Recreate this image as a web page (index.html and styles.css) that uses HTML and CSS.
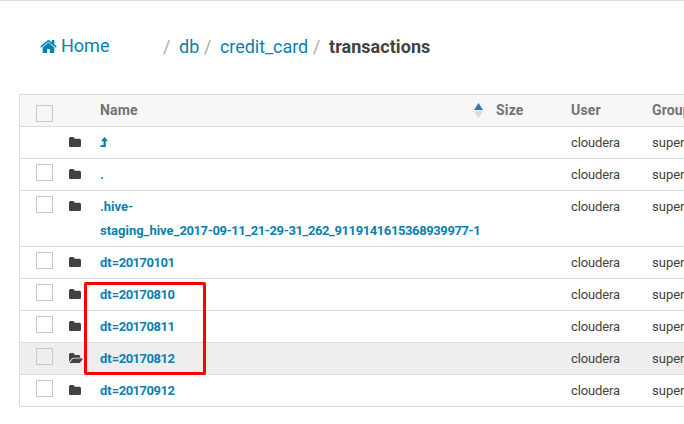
FILE: index.html
```html
<!DOCTYPE html>
<html lang="en">
<head>
<meta charset="utf-8">
<title>File Browser</title>
<link rel="stylesheet" href="styles.css">
</head>
<body>
<svg class="defs" aria-hidden="true">
  <symbol id="home" viewBox="89 253 1614 1283"><path d="M1472 992v480q0 26-19 45t-45 19h-384v-384h-256v384h-384q-26 0-45-19t-19-45v-480q0-1 .5-3t.5-3l575-474 575 474q1 2 1 6zm223-69l-62 74q-8 9-21 11h-3q-13 0-21-7l-692-577-692 577q-12 8-24 7-13-2-21-11l-62-74q-8-10-7-23.5t11-21.5l719-599q32-26 76-26t76 26l244 204v-195q0-14 9-23t23-9h192q14 0 23 9t9 23v408l219 182q10 8 11 21.5t-7 23.5z"/></symbol>
  <symbol id="folder" viewBox="64 128 1664 1408"><path d="M1728 608v704q0 92-66 158t-158 66h-1216q-92 0-158-66t-66-158v-960q0-92 66-158t158-66h320q92 0 158 66t66 158v32h672q92 0 158 66t66 158z"/></symbol>
  <symbol id="folder-open" viewBox="0 128 1920 1408"><path d="M1879 952q0 31-31 66l-336 396q-43 51-120.5 86.5t-143.5 35.5h-1088q-34 0-60.5-13t-26.5-43q0-31 31-66l336-396q43-51 120.5-86.5t143.5-35.5h1088q34 0 60.5 13t26.5 43zm-343-344v160h-832q-94 0-197 47.5t-164 119.5l-337 396-5 6q0-4-.5-12.5t-.5-12.5v-960q0-92 66-158t158-66h320q92 0 158 66t66 158v32h544q92 0 158 66t66 158z"/></symbol>
  <symbol id="level-up" viewBox="0 0 8 11"><path d="M4.5 0 7.6 3.5Q7.8 4.2 7 4.2H5.8V9.5Q5.8 10 5.3 10H.5L0 9.6 1.2 8H3.5V4.2H2Q1.2 4.2 1.4 3.5Z"/></symbol>
</svg>
<nav class="crumbs">
  <a class="home"><svg class="home-icon"><use href="#home"/></svg>Home</a>
  <span class="sep">/</span><a class="db">db</a>
  <span class="sep">/</span><a class="card">credit_card</a>
  <span class="sep">/</span><strong>transactions</strong>
</nav>
<main class="files">
  <div class="row head"><span class="box"></span><span></span><span>Name</span><svg class="sort" viewBox="0 0 9 15"><path class="up" d="M4.5 0 9 7H0Z"/><path class="down" d="M0 8H9L4.5 15Z"/></svg><span>Size</span><span>User</span><span>Group</span></div>
  <div class="row"><span></span><svg class="folder"><use href="#folder"/></svg><a class="name"><svg class="up-icon"><use href="#level-up"/></svg></a><span class="user">cloudera</span><span>supergroup</span></div>
  <div class="row"><span class="box"></span><svg class="folder"><use href="#folder"/></svg><a class="name">.</a><span class="user">cloudera</span><span>supergroup</span></div>
  <div class="row"><span class="box"></span><svg class="folder"><use href="#folder"/></svg><a class="name">.hive-<br>staging_hive_<span class="num">2017-09-11_21-29-31_262_9119141615368939977-1</span></a><span class="user">cloudera</span><span>supergroup</span></div>
  <div class="row"><span class="box"></span><svg class="folder"><use href="#folder"/></svg><a class="name">dt<span class="date">=20170101</span></a><span class="user">cloudera</span><span>supergroup</span></div>
  <div class="row marked"><span class="box"></span><svg class="folder"><use href="#folder"/></svg><a class="name">dt<span class="date">=20170810</span></a><span class="user">cloudera</span><span>supergroup</span><i class="highlight"></i></div>
  <div class="row"><span class="box"></span><svg class="folder"><use href="#folder"/></svg><a class="name">dt<span class="date">=20170811</span></a><span class="user">cloudera</span><span>supergroup</span></div>
  <div class="row active"><span class="box"></span><svg class="folder open"><use href="#folder-open"/></svg><a class="name">dt<span class="date">=20170812</span></a><span class="user">cloudera</span><span>supergroup</span></div>
  <div class="row"><span class="box"></span><svg class="folder"><use href="#folder"/></svg><a class="name">dt<span class="date">=20170912</span></a><span class="user">cloudera</span><span>supergroup</span></div>
</main>
</body>
</html>
```
FILE: styles.css
```css
* { box-sizing: border-box; }
body {
  margin: 0;
  height: 424px;
  overflow: hidden;
  border-top: 1px solid #dcdcdc;
  background: #fff;
  color: #424242;
  font: 13px/24px Roboto, "Liberation Sans", sans-serif;
}
svg { display: block; fill: currentColor; }
.defs { position: absolute; width: 0; height: 0; }
a { color: #0b7fad; }

.crumbs {
  display: flex;
  height: 93px;
  padding: 34px 0 0 40px;
  font-size: 18px;
}
.home { display: flex; width: 123px; margin-top: -1px; }
.home-icon { width: 17px; height: 13px; margin: 6px 4px 0 0; }
.sep { width: 16px; color: #aaa; }
.db { width: 25px; }
.card { width: 93px; letter-spacing: -0.05px; }
.crumbs strong { font-weight: 700; letter-spacing: 0.05px; }

.files {
  width: 665px;
  margin-left: 19px;
  border: 1px solid #dcdcdc;
  border-right: 0;
  overflow: hidden;
}
.row {
  display: grid;
  grid-template-columns: 33px 31px 374px 22px 75px 81px 70px;
  padding: 4px 0 3px 16px;
}
.row + .row { border-top: 1px solid #dcdcdc; }
.head {
  padding: 3px 0 4px 16px;
  background: #f7f7f7;
  color: #737373;
  font-size: 14px;
  font-weight: 700;
  letter-spacing: 0.15px;
}
.box {
  width: 17px;
  height: 17px;
  margin-top: 1px;
  border: 1px solid #c8c8c8;
}
.head .box { margin-top: 7px; }
.sort { width: 9px; height: 15px; margin-top: 5px; }
.up { fill: #2980b9; }
.down { fill: #dcdcdc; }
.folder { width: 12px; height: 10.2px; margin-top: 6px; }
.open { width: 14px; height: 10.3px; }
.name { font-weight: 700; white-space: nowrap; }
.num { letter-spacing: -0.4px; }
.date { letter-spacing: -0.5px; }
.up-icon { width: 8px; height: 11px; margin-top: 6px; }
.user { grid-column: 6; letter-spacing: -0.12px; }
.active { background: #eee; }

.marked { position: relative; }
.highlight {
  position: absolute;
  left: 64px;
  top: 3px;
  width: 122px;
  height: 93px;
  border: 3px solid #f00;
  border-radius: 2px;
  z-index: 1;
}
```
